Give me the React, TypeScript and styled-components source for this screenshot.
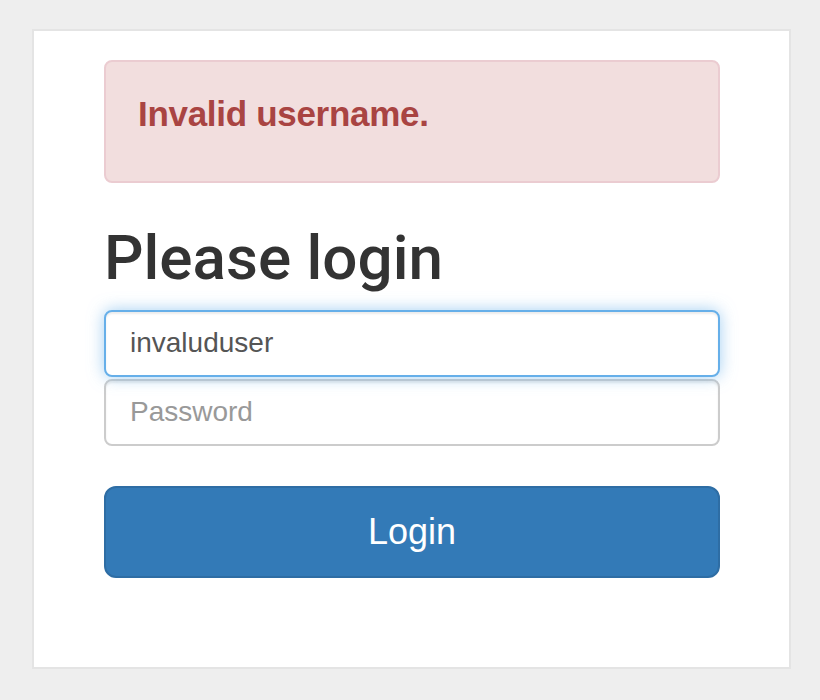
import React from "react";
import styled, { createGlobalStyle } from "styled-components";

const GlobalStyle = createGlobalStyle`
  html, body {
    margin: 0;
    padding: 0;
    background: #eeeeee;
  }
  body {
    font-family: "Liberation Sans", Arial, Helvetica, sans-serif;
    color: #333333;
  }
  * { box-sizing: border-box; }
`;

const Page = styled.div`
  min-height: 700px;
  padding: 29px 29px 31px 32px;
`;

const Card = styled.div`
  width: 759px;
  height: 640px;
  background: #ffffff;
  border: 2px solid #e4e4e4;
  padding: 29px 69px 0 70px;
`;

const Form = styled.form`
  display: flex;
  flex-direction: column;
  width: 616px;
  margin: 0;
`;

const Alert = styled.div`
  height: 123px;
  background: #f2dede;
  border: 2px solid #ebccd1;
  border-radius: 8px;
  color: #a94442;
  padding: 32px 32px 0 32px;
  font-size: 35px;
  line-height: 40px;
  font-weight: 700;
  letter-spacing: -0.3px;
`;

const Heading = styled.h2`
  margin: 42px 0 18.5px 0;
  font-family: Roboto, "Liberation Sans", Arial, sans-serif;
  font-weight: 500;
  font-size: 62px;
  line-height: 66px;
  color: #333333;
`;

const Field = styled.input<{ $focused?: boolean }>`
  display: block;
  position: relative;
  z-index: ${(p) => (p.$focused ? 2 : 1)};
  width: 100%;
  height: 67px;
  margin: ${(p) => (p.$focused ? "0" : "2px 0 0 0")};
  padding: 0 24px;
  font-family: "Liberation Sans", Arial, Helvetica, sans-serif;
  font-size: 28px;
  line-height: 31px;
  color: #555555;
  background: #ffffff;
  border: 2px solid ${(p) => (p.$focused ? "#66afe9" : "#cccccc")};
  border-radius: 8px;
  outline: none;
  box-shadow: ${(p) =>
    p.$focused
      ? "inset 0 2px 2px rgba(0,0,0,.075), 0 0 16px rgba(102,175,233,.6)"
      : "inset 0 2px 2px rgba(0,0,0,.075)"};
  &::placeholder {
    color: #999999;
    opacity: 1;
  }
`;

const SubmitButton = styled.button`
  display: block;
  width: 100%;
  height: 92px;
  margin-top: 40px;
  padding: 0;
  background: #337ab7;
  border: 2px solid #2e6da4;
  border-radius: 12px;
  color: #ffffff;
  font-family: "Liberation Sans", Arial, Helvetica, sans-serif;
  font-size: 36px;
  line-height: 40px;
  cursor: pointer;
`;

export default function App() {
  return (
    <>
      <GlobalStyle />
      <Page>
        <Card>
          <Form onSubmit={(e) => e.preventDefault()}>
            <Alert>Invalid username.</Alert>
            <Heading>Please login</Heading>
            <Field type="text" $focused defaultValue="invaluduser" placeholder="Username" />
            <Field type="password" placeholder="Password" />
            <SubmitButton type="submit">Login</SubmitButton>
          </Form>
        </Card>
      </Page>
    </>
  );
}
